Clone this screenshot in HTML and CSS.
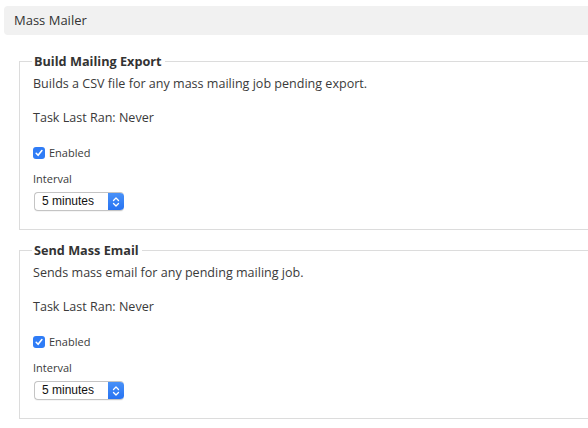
FILE: index.html
```html
<!DOCTYPE html>
<html>
<head>
<meta charset="utf-8">
<link rel="stylesheet" href="styles.css">
</head>
<body>
<div class="page">
  <div class="header">Mass Mailer</div>
  <div class="tasks">
    <fieldset class="task">
      <legend>Build Mailing Export</legend>
      <p class="desc">Builds a CSV file for any mass mailing job pending export.</p>
      <p class="desc">Task Last Ran: Never</p>
      <label class="check"><span class="box"><svg width="12" height="12" viewBox="0 0 12 12"><path d="M3.2 6.3 L5.1 8.3 L8.9 3.6" fill="none" stroke="#fff" stroke-width="1.6" stroke-linecap="round" stroke-linejoin="round"/></svg></span>Enabled</label>
      <div class="field-label">Interval</div>
      <div class="select"><span class="select-text">5 minutes</span><span class="select-btn"><svg width="16" height="18" viewBox="0 0 16 18"><path d="M5.5 7.5 L8 5 L10.5 7.5 M5.5 10.5 L8 13 L10.5 10.5" fill="none" stroke="#fff" stroke-width="1.3" stroke-linecap="round" stroke-linejoin="round"/></svg></span></div>
    </fieldset>
    <fieldset class="task">
      <legend>Send Mass Email</legend>
      <p class="desc">Sends mass email for any pending mailing job.</p>
      <p class="desc">Task Last Ran: Never</p>
      <label class="check"><span class="box"><svg width="12" height="12" viewBox="0 0 12 12"><path d="M3.2 6.3 L5.1 8.3 L8.9 3.6" fill="none" stroke="#fff" stroke-width="1.6" stroke-linecap="round" stroke-linejoin="round"/></svg></span>Enabled</label>
      <div class="field-label">Interval</div>
      <div class="select"><span class="select-text">5 minutes</span><span class="select-btn"><svg width="16" height="18" viewBox="0 0 16 18"><path d="M5.5 7.5 L8 5 L10.5 7.5 M5.5 10.5 L8 13 L10.5 10.5" fill="none" stroke="#fff" stroke-width="1.3" stroke-linecap="round" stroke-linejoin="round"/></svg></span></div>
    </fieldset>
  </div>
</div>
</body>
</html>
```

FILE: styles.css
```css
html, body {
  margin: 0;
  padding: 0;
  overflow: hidden;
  background: #fff;
}
body {
  font-family: "Open Sans", "DejaVu Sans", sans-serif;
  color: #3a3a3a;
  width: 588px;
  height: 428px;
}
.page {
  width: 640px;
  padding-top: 6px;
}
.header {
  margin-left: 4px;
  height: 29px;
  line-height: 29px;
  background: #f1f1f1;
  border-radius: 4px;
  padding-left: 10px;
  font-size: 13px;
  color: #333;
}
.tasks {
  padding: 17px 0 0 19px;
  display: flex;
  flex-direction: column;
  gap: 11px;
}
.task {
  margin: 0;
  border: 1px solid #dcdcdc;
  padding: 5px 12px 18px 13px;
  min-width: 0;
}
.task legend {
  font-weight: 700;
  font-size: 12.7px;
  line-height: 18px;
  padding: 0 3px 0 2px;
  margin-left: -1px;
  color: #333;
}
.desc {
  margin: 0 0 16px;
  font-size: 12.55px;
  line-height: 18px;
}
.check {
  display: flex;
  align-items: center;
  gap: 4px;
  font-size: 11px;
  line-height: 14px;
  margin-top: 19px;
}
.box {
  width: 12px;
  height: 12px;
  border-radius: 3px;
  background: #2f7cf6;
  display: flex;
}
.field-label {
  margin-top: 11px;
  font-size: 11px;
  line-height: 15px;
}
.select {
  margin-top: 6px;
  margin-left: 1px;
  width: 90px;
  height: 19px;
  box-sizing: border-box;
  border: 1px solid #c4c4c4;
  border-right: none;
  border-radius: 4px;
  display: flex;
  overflow: hidden;
  box-shadow: 0 1px 0 rgba(0,0,0,0.04);
}
.select-text {
  flex: 1;
  font-family: "Liberation Sans", Arial, sans-serif;
  font-size: 12px;
  line-height: 17px;
  padding-left: 7px;
  color: #111;
}
.select-btn {
  width: 16px;
  margin: -1px 0;
  background: linear-gradient(#4b93f8, #2571f2);
  display: flex;
  align-items: center;
  border-radius: 0 4px 4px 0;
}
```
